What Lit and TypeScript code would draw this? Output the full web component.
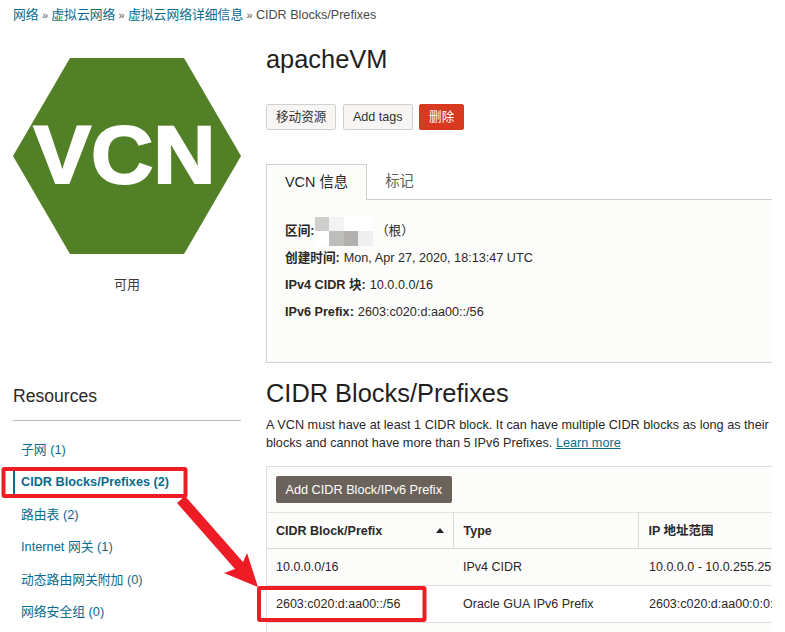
import { LitElement, html, css, svg } from "lit";
import { customElement } from "lit/decorators.js";

const navItems: [string, boolean][] = [
  ["子网 (1)", false],
  ["CIDR Blocks/Prefixes (2)", true],
  ["路由表 (2)", false],
  ["Internet 网关 (1)", false],
  ["动态路由网关附加 (0)", false],
  ["网络安全组 (0)", false],
];

@customElement("app-root")
export class AppRoot extends LitElement {
  static styles = css`
    :host {
      display: block;
      position: relative;
      width: 785px;
      height: 632px;
      overflow: hidden;
      background: #fff;
      color: #2a2826;
      font-family: "Liberation Sans", "Noto Sans CJK SC", sans-serif;
      font-size: 12.7px;
    }
    a { color: #0b6b8c; text-decoration: none; }
    .crumbs { height: 16px; padding: 7px 0 0 13px; font-size: 12.8px; line-height: 16px; color: #4b4a48; white-space: nowrap; display: flex; gap: 3.3px; }
    .crumbs .sep { font-size: 11px; color: #555; }
    .crumbs .here { font-size: 12.6px; }
    .page { display: flex; gap: 25px; padding: 21px 13px 0; }
    .left { width: 228px; flex: none; }
    .right { width: 506px; flex: none; overflow: hidden; }
    .logo-wrap { padding-top: 14px; height: 197px; }
    .logo-wrap svg { display: block; }
    .logo-text { font: 700 81px "Liberation Sans", sans-serif; fill: #fff; stroke: #fff; stroke-width: 2px; }
    .status { margin-top: 22px; text-align: center; font-size: 13px; line-height: 16px; color: #3b3a38; }
    .res-title { margin-top: 92px; font-size: 17.6px; line-height: 22px; color: #2a2826; padding-bottom: 13px; border-bottom: 1px solid #bdbcb9; }
    .nav { margin-top: 12px; display: flex; flex-direction: column; }
    .nav a { display: block; height: 32.6px; line-height: 33px; padding-left: 8px; font-size: 12.8px; white-space: nowrap; }
    .nav a.active { font-weight: 700; border-left: 2px solid #0b6b8c; padding-left: 6px; height: 31px; line-height: 31px; margin-top: 1px; font-size: 12.7px; }
    h1 { margin: 0; font-weight: 400; font-size: 25.4px; line-height: 30px; color: #1f1e1d; }
    .actions { display: flex; gap: 6.5px; margin-top: 30px; }
    .btn { height: 26px; box-sizing: border-box; padding: 0 9px; border: 1px solid #d3d1ce; border-radius: 2px; background: #f7f6f5; color: #333; font: 12.6px/24px "Liberation Sans", "Noto Sans CJK SC", sans-serif; }
    .btn.danger { background: #d73a21; border-color: #d73a21; color: #fff; }
    .tabs { display: flex; margin-top: 34px; height: 36px; border-bottom: 1px solid #d3d1ce; box-sizing: border-box; }
    .tab { padding: 0 18px; font-size: 14.4px; line-height: 35px; color: #5f5e5c; }
    .tab.on { background: #fcfcfb; color: #2a2826; border: 1px solid #d3d1ce; border-bottom: 0; height: 36px; box-sizing: border-box; }
    .panel { height: 163px; box-sizing: border-box; border-left: 1px solid #d3d1ce; border-bottom: 1px solid #d3d1ce; background: #fcfcfb; padding: 17.5px 0 0 18px; font-size: 12.65px; }
    .panel .row { height: 27px; line-height: 27px; display: flex; align-items: center; white-space: nowrap; }
    .panel b { font-weight: 700; margin-right: 4px; }
    .panel b.tight { margin-right: 0; }
    .blur { display: inline-grid; grid-template-columns: repeat(4, 14.6px); grid-template-rows: 14.5px 14.5px; width: 58.4px; height: 29px; margin-right: 3px; }
    .blur i { display: block; }
    h2 { margin: 15px 0 0; font-weight: 400; font-size: 25.4px; line-height: 30px; color: #1f1e1d; white-space: nowrap; }
    .desc { margin: 8px 0 0; font-size: 12.7px; line-height: 18px; white-space: nowrap; color: #2a2826; }
    .desc a { text-decoration: underline; }
    .card { margin-top: 14px; border: 1px solid #e1e0de; border-right: 0; background: #fcfcfb; height: 180px; border-radius: 2px 0 0 0; }
    .card-top { padding: 9px; height: 27px; }
    .primary { display: block; height: 27px; border: 0; border-radius: 2px; background: #6b625c; color: #fff; padding: 0 9.5px; font: 12.7px "Liberation Sans", sans-serif; }
    table { border-collapse: collapse; table-layout: fixed; width: 560px; font-size: 12.5px; line-height: 16px; }
    th { height: 35px; padding: 0 9px 0 10px; text-align: left; font-weight: 700; border-top: 1px solid #e4e3e1; border-bottom: 1px solid #d8d7d5; border-right: 1px solid #dcdbd9; white-space: nowrap; }
    th:first-child { padding-left: 9px; }
    th:last-child { border-right: 0; }
    td { height: 36px; padding: 0 9px 0 10px; border-bottom: 1px solid #e1e0de; white-space: nowrap; overflow: hidden; }
    td:first-child { padding-left: 9px; }
    td:last-child { padding-left: 11px; }
    tbody tr:last-child td { background: #fff; }
    .th-inner { display: flex; justify-content: space-between; align-items: center; }
    .arrow { width: 0; height: 0; border-left: 4.5px solid transparent; border-right: 4.5px solid transparent; border-bottom: 5px solid #222; margin-right: 0; }
    .note { position: absolute; left: 0; top: 0; pointer-events: none; }
  `;

  render() {
    const blur = ["#cfcecd", "#f3f3f3", "#fff", "#fff", "#fff", "#bdbdbc", "#b3b1af", "#efefef"];
    return html`
      <div class="crumbs">
        <a href="#">网络</a><span class="sep">»</span>
        <a href="#">虚拟云网络</a><span class="sep">»</span>
        <a href="#">虚拟云网络详细信息</a><span class="sep">»</span>
        <span class="here">CIDR Blocks/Prefixes</span>
      </div>
      <div class="page">
        <div class="left">
          <div class="logo-wrap">
            <svg width="228" height="197" viewBox="0 0 228 197">
              <polygon points="57,0 171,0 228,98 171,196 57,196 0,98" fill="#528026"></polygon>
              ${svg`<text class="logo-text" x="111.5" y="125" text-anchor="middle" textLength="182" lengthAdjust="spacingAndGlyphs">VCN</text>`}
            </svg>
          </div>
          <div class="status">可用</div>
          <div class="res-title">Resources</div>
          <nav class="nav">
            ${navItems.map(([t, on]) => html`<a href="#" class=${on ? "active" : ""}>${t}</a>`)}
          </nav>
        </div>
        <div class="right">
          <h1>apacheVM</h1>
          <div class="actions">
            <button class="btn">移动资源</button>
            <button class="btn">Add tags</button>
            <button class="btn danger">删除</button>
          </div>
          <div class="tabs">
            <div class="tab on">VCN 信息</div>
            <div class="tab">标记</div>
          </div>
          <div class="panel">
            <div class="row"><b class="tight">区间:</b><span class="blur">${blur.map((c) => html`<i style="background:${c}"></i>`)}</span><span>（根）</span></div>
            <div class="row"><b>创建时间:</b>Mon, Apr 27, 2020, 18:13:47 UTC</div>
            <div class="row"><b>IPv4 CIDR 块:</b>10.0.0.0/16</div>
            <div class="row"><b>IPv6 Prefix:</b>2603:c020:d:aa00::/56</div>
          </div>
          <h2>CIDR Blocks/Prefixes</h2>
          <p class="desc">A VCN must have at least 1 CIDR block. It can have multiple CIDR blocks as long as their<br />blocks and cannot have more than 5 IPv6 Prefixes. <a href="#">Learn more</a></p>
          <div class="card">
            <div class="card-top"><button class="primary">Add CIDR Block/IPv6 Prefix</button></div>
            <table>
              <colgroup><col style="width:186px" /><col style="width:185px" /><col style="width:189px" /></colgroup>
              <thead><tr>
                <th><div class="th-inner">CIDR Block/Prefix<span class="arrow"></span></div></th>
                <th>Type</th>
                <th>IP 地址范围</th>
              </tr></thead>
              <tbody>
                <tr><td>10.0.0.0/16</td><td>IPv4 CIDR</td><td>10.0.0.0 - 10.0.255.255</td></tr>
                <tr><td>2603:c020:d:aa00::/56</td><td>Oracle GUA IPv6 Prefix</td><td>2603:c020:d:aa00:0:0:0:0</td></tr>
              </tbody>
            </table>
          </div>
        </div>
      </div>
      <svg class="note" width="785" height="632" viewBox="0 0 785 632" fill="none">
        <rect x="3.5" y="469" width="182" height="27" stroke="#ee1c25" stroke-width="4" rx="1"></rect>
        <rect x="259" y="588" width="165.5" height="32" stroke="#ee1c25" stroke-width="4" rx="1"></rect>
        <polygon points="177,503 185,496 243,562 247,553 258,587 224,573 235,569" fill="#ee1c25"></polygon>
      </svg>
    `;
  }
}
